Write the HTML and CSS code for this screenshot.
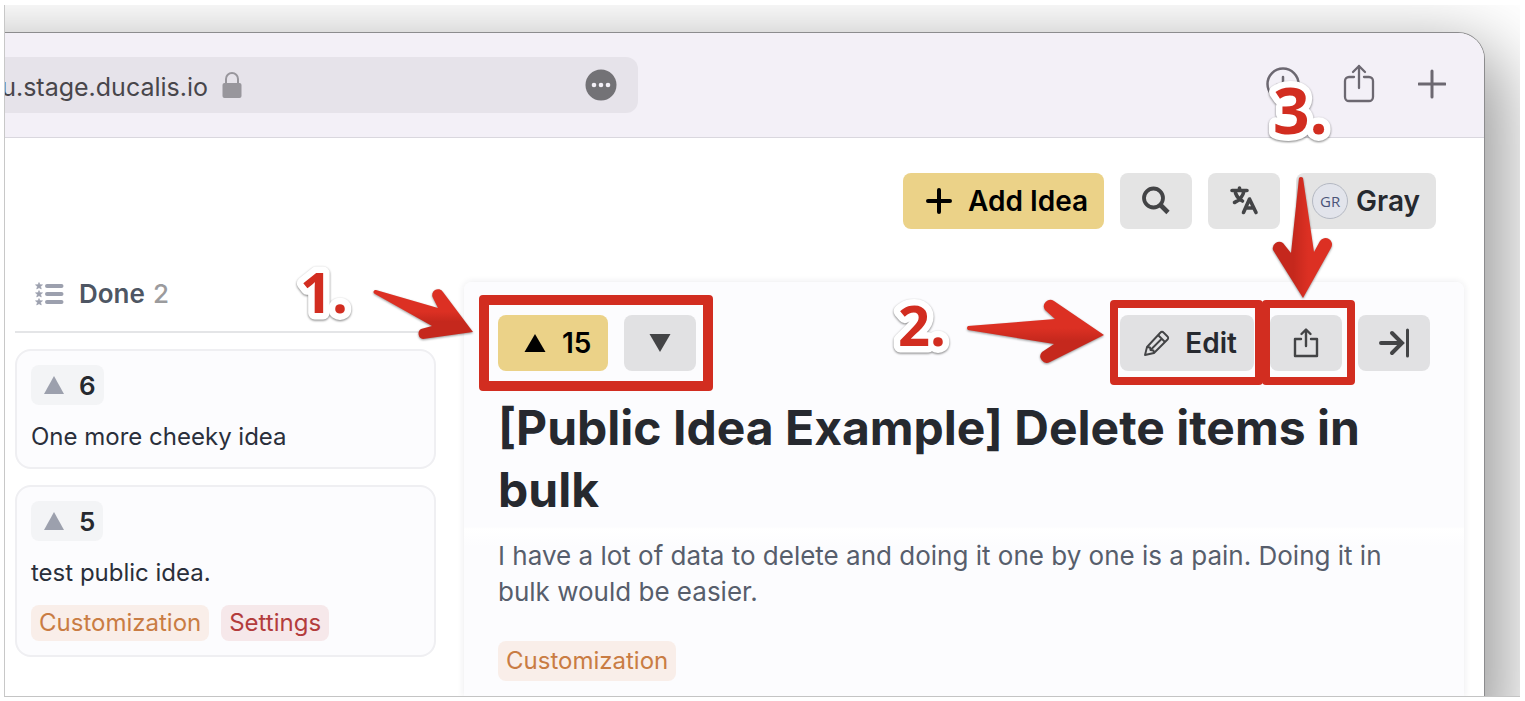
FILE: index.html
```html
<!DOCTYPE html>
<html lang="en">

<head>
    <meta charset="UTF-8">
    <meta name="viewport" content="width=device-width, initial-scale=1.0">
    <title>Ducalis public board</title>
    <link rel="stylesheet" href="styles.css">
</head>

<body>
    <div class="shot">
        <div class="window">
            <!-- browser toolbar -->
            <div class="toolbar">
                <div class="address">
                    <input class="url" type="text" value="u.stage.ducalis.io" aria-label="Address">
                    <svg class="lock" width="20" height="28" viewBox="0 0 20 28">
                        <path d="M4 13V8a6 6 0 0 1 12 0v5" fill="none" stroke="#98969c" stroke-width="2"/>
                        <rect x="0.500" y="12" width="19" height="15" rx="2" fill="#98969c"/>
                    </svg>
                    <button class="more" aria-label="More">
                        <svg width="32" height="32" viewBox="0 0 32 32">
                            <circle cx="16" cy="16" r="15.500" fill="#737276"/>
                            <circle cx="9" cy="16" r="2.300" fill="#f3f0f7"/>
                            <circle cx="16" cy="16" r="2.300" fill="#f3f0f7"/>
                            <circle cx="23" cy="16" r="2.300" fill="#f3f0f7"/>
                        </svg>
                    </button>
                </div>
                <div class="tools">
                    <button aria-label="Downloads">
                        <svg width="34" height="40" viewBox="0 0 34 40">
                            <g fill="none" stroke="#6c6871" stroke-width="2.500" stroke-linecap="round">
                                <circle cx="17" cy="20" r="15.500"/>
                                <path d="M17 13v14M11 21l6 6 6-6"/>
                            </g>
                        </svg>
                    </button>
                    <button aria-label="Share">
                        <svg width="32" height="40" viewBox="0 0 32 40">
                            <g fill="none" stroke="#6c6871" stroke-width="2.300" stroke-linecap="round" stroke-linejoin="round">
                                <path d="M11 13H6a4 4 0 0 0-4 4v16a4 4 0 0 0 4 4h20a4 4 0 0 0 4-4V17a4 4 0 0 0-4-4h-5"/>
                                <path d="M16 24V2M10 8l6-6 6 6"/>
                            </g>
                        </svg>
                    </button>
                    <button aria-label="New tab">
                        <svg width="28" height="40" viewBox="0 0 28 40">
                            <path d="M14 7v26M1 20h26" stroke="#6c6871" stroke-width="3" stroke-linecap="round"/>
                        </svg>
                    </button>
                </div>
            </div>

            <!-- page -->
            <div class="app">
                <header class="header">
                    <button class="btn btn-yellow btn-add">
                        <svg width="26" height="26" viewBox="0 0 26 26">
                            <path d="M13 2v22M2 13h22" stroke="#000" stroke-width="4" stroke-linecap="round"/>
                        </svg>
                        Add Idea
                    </button>
                    <button class="btn btn-icon" aria-label="Search">
                        <svg width="32" height="32" viewBox="0 0 32 32">
                            <circle cx="13.500" cy="13" r="9.500" fill="none" stroke="#434446" stroke-width="3.800"/>
                            <path d="M20 19.500l8 8" stroke="#434446" stroke-width="4.600"/>
                        </svg>
                    </button>
                    <button class="btn btn-icon" aria-label="Language">
                        <svg width="32" height="32" viewBox="0 0 32 32">
                            <g fill="none" stroke="#434446" stroke-width="3.600" stroke-linecap="round" stroke-linejoin="round">
                                <path d="M4 5.500h15M11.500 3v2M16 6c-1 5-5 9.500-9.500 11.500M7.500 8c1.500 4 4 6.500 7 8"/>
                                <path d="M15.500 27.500L21.500 14l6.500 13.500M18 23h7.500"/>
                            </g>
                        </svg>
                    </button>
                    <button class="btn btn-user">
                        <span class="avatar">GR</span>
                        Gray
                    </button>
                </header>

                <div class="board">
                    <section class="column">
                        <h2 class="column-title">
                            <svg width="30" height="24" viewBox="0 0 30 24">
                                <g stroke="#9ca0ae" stroke-width="4" stroke-linecap="round">
                                    <path d="M12 4h14.500M12 12h14.500M12 20h14.500"/>
                                </g>
                                <g fill="#9ca0ae" stroke="#9ca0ae" stroke-width="0.600">
                                    <path id="star" d="M4 0.500l1 2.200 2.500.1-1.900 1.700.7 2.500L4 5.700 1.700 7l.7-2.500L.5 2.800 3 2.700z"/>
                                    <use href="#star" y="8"/>
                                    <use href="#star" y="16"/>
                                </g>
                            </svg>
                            Done <span class="count">2</span>
                        </h2>

                        <article class="card">
                            <button class="votes">
                                <svg width="20" height="18" viewBox="0 0 20 18"><path d="M10 0l10 18H0z" fill="#9ca0ad"/></svg>
                                6
                            </button>
                            <p class="card-text">One more cheeky idea</p>
                        </article>

                        <article class="card">
                            <button class="votes">
                                <svg width="20" height="18" viewBox="0 0 20 18"><path d="M10 0l10 18H0z" fill="#9ca0ad"/></svg>
                                5
                            </button>
                            <p class="card-text">test public idea.</p>
                            <div class="tags">
                                <span class="tag tag-orange">Customization</span>
                                <span class="tag tag-red">Settings</span>
                            </div>
                        </article>
                    </section>

                    <main class="idea">
                        <div class="idea-bar">
                            <div class="group mark-vote">
                                <button class="btn btn-yellow btn-vote">
                                    <svg width="22" height="18" viewBox="0 0 22 18"><path d="M11 0l10.500 18H0.500z"/></svg>
                                    15
                                </button>
                                <button class="btn btn-icon" aria-label="Vote down">
                                    <svg width="22" height="18" viewBox="0 0 22 18"><path d="M11 18L21.500 0H0.500z" fill="#434446"/></svg>
                                </button>
                            </div>
                            <div class="group">
                                <div class="mark-edit">
                                    <button class="btn btn-edit">
                                        <svg width="28" height="28" viewBox="0 0 28 28">
                                            <g fill="none" stroke="#434446" stroke-width="1.900" stroke-linejoin="round">
                                                <path d="M2 26l2-8L17.500 3.500a2 2 0 0 1 3 0l4 4a2 2 0 0 1 0 3L11 24z"/>
                                                <path d="M4 18l3 .5.500 2.500 3 .5.500 2.500M15 6l7 7M8 20.500L19 9.500"/>
                                            </g>
                                        </svg>
                                        Edit
                                    </button>
                                </div>
                                <div class="mark-share">
                                    <button class="btn btn-icon" aria-label="Share idea">
                                        <svg width="28" height="32" viewBox="0 0 28 32">
                                            <g fill="none" stroke="#434446" stroke-width="2.400" stroke-linecap="round" stroke-linejoin="round">
                                                <path d="M9 12H3v17h22V12h-6"/>
                                                <path d="M14 19V3M9.500 7L14 2.500 18.500 7"/>
                                            </g>
                                        </svg>
                                    </button>
                                </div>
                                <button class="btn btn-icon" aria-label="Collapse">
                                    <svg width="32" height="32" viewBox="0 0 32 32">
                                        <g fill="none" stroke="#434446" stroke-linecap="round">
                                            <path d="M3 16h20M14 6l10 10-10 10" stroke-width="4"/>
                                            <path d="M29.500 3v26" stroke-width="3"/>
                                        </g>
                                    </svg>
                                </button>
                            </div>
                        </div>
                        <h1 class="idea-title">[Public Idea Example] Delete items in bulk</h1>
                        <p class="idea-text">I have a lot of data to delete and doing it one by one is a pain. Doing it in bulk would be easier.</p>
                        <div class="tags">
                            <span class="tag tag-orange tag-big">Customization</span>
                        </div>
                    </main>
                </div>
            </div>
        </div>
    </div>

    <!-- step numbers and arrows -->
    <svg class="notes" width="1525" height="701" viewBox="0 0 1525 701">
        <defs>
            <linearGradient id="down" x1="0" y1="0" x2="0" y2="1">
                <stop offset="0.450" stop-color="#dc3023"/>
                <stop offset="0.650" stop-color="#c5281d"/>
            </linearGradient>
            <linearGradient id="side" x1="0" y1="0" x2="1" y2="0">
                <stop offset="0.350" stop-color="#c5281d"/>
                <stop offset="0.600" stop-color="#dc3023"/>
            </linearGradient>
        </defs>
        <g class="arrow">
            <path fill="url(#down)" d="M376 290L438 308 433 298A5.500 5.500 0 0 1 443 292L473 332 423 339A5.500 5.500 0 0 1 421 329L432 326 375 294A2 2 0 0 1 376 290z"/>
            <path fill="url(#down)" d="M968 326L1055 319 1045 310A6.500 6.500 0 0 1 1054 301L1104 335 1050 362A6.500 6.500 0 0 1 1042 352L1054 344 968 330A2.500 2.500 0 0 1 968 326z"/>
            <path fill="url(#side)" d="M1299 178L1291 253 1283 243A6.500 6.500 0 0 0 1273 250L1303 298 1331 248A6.500 6.500 0 0 0 1320 241L1314 252 1303 178A2.500 2.500 0 0 0 1299 178z"/>
        </g>
        <g class="step">
            <text x="300" y="313">1.</text>
            <text x="898" y="346">2.</text>
            <text class="step-big" x="1273" y="134">3.</text>
        </g>
    </svg>
</body>

</html>
```
FILE: styles.css
```css
* {
    box-sizing: border-box;
}

body {
    margin: 0;
    padding: 5px 5px 4px 4px;
    background: #fff;
    color: #26292f;
    font-family: Inter, "Liberation Sans", sans-serif;
}

h1, h2, p {
    margin: 0;
}

button {
    font: inherit;
    color: inherit;
    border: 0;
    padding: 0;
    background: none;
}

svg {
    display: block;
    flex: none;
}

/* cut-out of the desktop, the window runs out of it on the left */
.shot {
    display: flex;
    height: calc(100vh - 9px);
    padding: 28px 36px 0 0;
    overflow: hidden;
    border-left: 1px solid #c8c8c8;
    border-bottom: 1px solid #c4c4c4;
}

.window {
    flex: 1;
    display: flex;
    flex-direction: column;
    margin-left: -60px;
    background: #fff;
    border-radius: 0 26px 0 0;
    box-shadow: 0 0 0 1px #8c8c8e, 0 34px 70px 20px rgba(0, 0, 0, 0.4);
}

/* toolbar */
.toolbar {
    display: flex;
    justify-content: space-between;
    align-items: center;
    height: 105px;
    padding-right: 38px;
    background: #f3f0f7;
    border-bottom: 1px solid #d9d7de;
    border-radius: 0 26px 0 0;
}

.address {
    flex: 0 1 693px;
    display: flex;
    align-items: center;
    height: 56px;
    padding-right: 21px;
    background: #e6e3ea;
    border-radius: 0 12px 12px 0;
}

.url {
    width: 263px;
    padding: 4px 0 0;
    border: 0;
    background: none;
    color: #48464b;
    font-family: inherit;
    font-size: 25px;
    text-align: right;
}

.lock {
    margin-left: 14px;
}

.more {
    margin-left: auto;
}

.tools {
    display: flex;
    gap: 43px;
    padding-bottom: 3px;
}

/* page */
.app {
    flex: 1;
    min-height: 0;
    display: flex;
    flex-direction: column;
    gap: 53px;
    padding: 35px 20px 0 70px;
}

.header {
    display: flex;
    justify-content: flex-end;
    gap: 16px;
    padding-right: 28px;
}

.btn {
    display: flex;
    align-items: center;
    justify-content: center;
    height: 56px;
    background: #e4e4e4;
    border-radius: 8px;
    font-size: 28px;
    font-weight: 600;
}

.btn-yellow {
    background: #ebd288;
    color: #000;
}

.btn-icon {
    width: 72px;
}

.btn-add {
    gap: 16px;
    padding: 0 16px 0 23px;
}

.btn-user {
    gap: 8px;
    padding: 0 16px;
}

.avatar {
    width: 36px;
    height: 36px;
    border: 1px solid #b4b8c2;
    border-radius: 50%;
    background: #e2e4eb;
    color: #4a5578;
    font: 15px/34px "Open Sans", sans-serif;
    text-align: center;
}

.board {
    flex: 1;
    min-height: 0;
    display: grid;
    grid-template-columns: 421fr 1000fr;
    gap: 28px;
}

/* left column */
.column {
    display: flex;
    flex-direction: column;
    gap: 16px;
}

.column-title {
    display: flex;
    align-items: center;
    height: 51px;
    padding: 0 0 26px 20px;
    border-bottom: 2px solid #e4e5e7;
    color: #4e5663;
    font-size: 26px;
    line-height: 24px;
    font-weight: 600;
}

.column-title svg {
    margin-right: 14px;
}

.count {
    margin-left: 8px;
    color: #9b9b9d;
    font-weight: 500;
}

.card {
    display: flex;
    flex-direction: column;
    align-items: flex-start;
    gap: 16px;
    padding: 14px;
    background: #fcfcfe;
    border: 2px solid #efeff2;
    border-radius: 16px;
}

.votes {
    display: flex;
    align-items: center;
    gap: 15px;
    height: 40px;
    padding: 0 8px 0 13px;
    background: #f3f4f6;
    border-radius: 8px;
    font-size: 26px;
    font-weight: 600;
}

.card-text {
    color: #2a2f3b;
    font-size: 24px;
    line-height: 32px;
}

.tags {
    display: flex;
    gap: 12px;
}

.tag {
    padding: 0 8px;
    border-radius: 8px;
    font-size: 24px;
    line-height: 36px;
}

.tag-orange {
    background: #f9eee9;
    color: #c97c43;
}

.tag-red {
    background: #f6e8ea;
    color: #b33c3c;
}

.tag-big {
    line-height: 40px;
}

/* opened idea */
.idea {
    padding: 33px 34px 0;
    background: linear-gradient(#fcfcfe 245px, #fff 247px, #fcfcfe 264px);
    border-radius: 8px 8px 0 0;
    box-shadow: 0 0 6px 1px rgba(40, 40, 60, 0.08);
}

.idea-bar {
    display: flex;
    justify-content: space-between;
}

.idea .btn {
    background: #e1e1e3;
}

.idea .btn-yellow {
    background: #ebd288;
}

.group {
    display: flex;
    gap: 16px;
}

.btn-vote {
    gap: 16px;
    padding: 0 17px 0 26px;
}

.btn-edit {
    gap: 14px;
    padding: 0 17px 0 23px;
}

.idea-title {
    margin-top: 26px;
    font-size: 48px;
    line-height: 62px;
    font-weight: 700;
}

.idea-text {
    margin: 17px 0 31px;
    color: #575e6c;
    font-size: 26px;
    line-height: 36px;
}

/* red frames around the buttons */
.mark-vote,
.mark-edit,
.mark-share {
    position: relative;
}

.mark-vote::after,
.mark-edit::after,
.mark-share::after {
    content: "";
    position: absolute;
    border: 8px solid #d22d20;
    border-radius: 4px;
    pointer-events: none;
}

.mark-vote::after {
    inset: -20px -17px -20px -19px;
    border-width: 10px;
}

.mark-edit::after {
    inset: -15px -9px -14px -10px;
}

.mark-share::after {
    inset: -15px -13px -14px -8px;
}

.notes {
    position: absolute;
    top: 0;
    left: 0;
    pointer-events: none;
}

.arrow {
    filter: drop-shadow(0 1px 1px rgba(0, 0, 0, 0.4));
}

.step {
    fill: #d22d20;
    stroke: #fff;
    stroke-width: 13px;
    stroke-linejoin: round;
    paint-order: stroke;
    font-family: "Open Sans", sans-serif;
    font-size: 56px;
    font-weight: 700;
    filter: drop-shadow(0 1px 1px rgba(0, 0, 0, 0.5));
}

.step-big {
    font-size: 64px;
}
```
